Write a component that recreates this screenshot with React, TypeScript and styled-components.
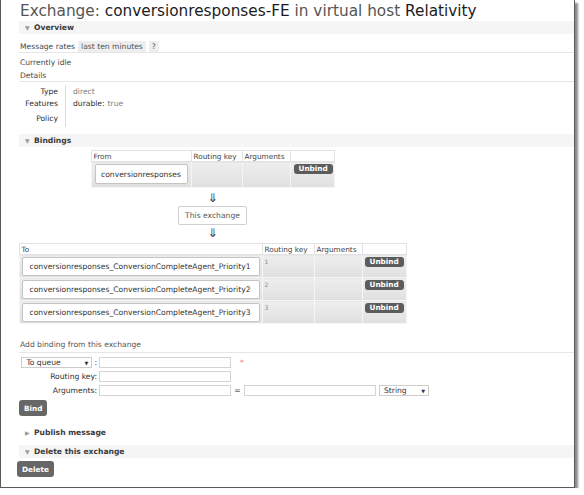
import styled, { createGlobalStyle } from "styled-components";

const GlobalStyle = createGlobalStyle`
  html, body {
    margin: 0;
    padding: 0;
    background: #ffffff;
  }
  body {
    font-family: "DejaVu Sans", Verdana, sans-serif;
    font-size: 7.6px;
    color: #484848;
  }
`;

const Frame = styled.div`
  width: 575px;
  height: 488px;
  box-sizing: border-box;
  border: 1px solid #5a5a5a;
  border-top: none;
  box-shadow: 3px 3px 2px rgba(0, 0, 0, 0.45);
  background: #ffffff;
  padding: 3px 0 0 18px;
  overflow: hidden;
`;

const Title = styled.h1`
  margin: 0 0 1px 1px;
  font-size: 15.3px;
  line-height: 17px;
  font-weight: normal;
  color: #555;
  white-space: nowrap;

  b {
    font-weight: normal;
    color: #1c1c1c;
  }
`;

const SectionHeader = styled.div<{ $band?: boolean }>`
  height: 13px;
  display: flex;
  align-items: center;
  padding-left: 6px;
  background: ${(p) => (p.$band ? "#f5f5f5" : "transparent")};
  font-weight: bold;
  color: #3a3a3a;
`;

const Arrow = styled.span`
  font-size: 6px;
  color: #9a9a9a;
  width: 9px;
`;

const Row = styled.div<{ $line?: boolean }>`
  height: 12px;
  display: flex;
  align-items: center;
  gap: 3px;
  padding-left: 1px;
  border-bottom: 1px solid ${(p) => (p.$line ? "#e6e6e6" : "transparent")};
`;

const Chip = styled.span`
  background: #eeeeee;
  padding: 1px 3px;
  color: #555;
`;

const Details = styled.div`
  display: grid;
  grid-template-columns: 47px 1fr;
  margin: 3px 0 7px 0;
`;

const DetailKey = styled.div<{ $h: number }>`
  height: ${(p) => p.$h}px;
  padding-right: 7px;
  border-right: 1px solid #dcdcdc;
  color: #2e2e2e;
  display: flex;
  align-items: center;
  justify-content: flex-end;
`;

const DetailValue = styled.div<{ $h: number }>`
  height: ${(p) => p.$h}px;
  padding-left: 7px;
  display: flex;
  align-items: center;
  color: #808080;

  b {
    font-weight: normal;
    color: #2e2e2e;
    margin-right: 3px;
  }
`;

const Bindings = styled.div`
  width: 387px;
  display: flex;
  flex-direction: column;
  align-items: center;
  margin-top: 3px;
`;

const Table = styled.table<{ $w: number; $pad: string }>`
  width: ${(p) => p.$w}px;
  border-collapse: collapse;
  table-layout: fixed;
  font-size: 7.3px;

  th {
    text-align: left;
    font-weight: normal;
    color: #444;
    height: 10px;
    padding: 0 2px;
    border: 1px solid #e2e2e2;
    background: #fff;
  }

  td {
    vertical-align: top;
    background: linear-gradient(#eeeeee, #e0e0e0);
    border: 1px solid #f6f6f6;
    padding: ${(p) => p.$pad};
  }
`;

const NameBox = styled.div<{ $h: number; $align?: string }>`
  background: #fff;
  border: 1px solid #c4c4c4;
  border-radius: 2px;
  height: ${(p) => p.$h}px;
  box-sizing: border-box;
  display: flex;
  align-items: center;
  justify-content: ${(p) => p.$align || "center"};
  padding: 0 7px;
  font-size: 7.6px;
  color: #333;
  white-space: nowrap;
`;

const Key = styled.span`
  font-size: 6px;
  color: #888;
`;

const SmallButton = styled.button`
  background: #5c5c5c;
  color: #fff;
  border: none;
  border-radius: 3px;
  font-family: inherit;
  font-weight: bold;
  font-size: 7.3px;
  height: 10px;
  padding: 0 5px;
  line-height: 10px;
`;

const Button = styled.button`
  background: #676767;
  color: #fff;
  border: none;
  border-radius: 3px;
  font-family: inherit;
  font-weight: bold;
  font-size: 7.3px;
  height: 16px;
  padding: 0 5px;
`;

const DownArrow = styled.div<{ $top: number; $bottom: number }>`
  font-size: 12px;
  color: #333;
  line-height: 12px;
  height: 12px;
  margin: ${(p) => p.$top}px 0 ${(p) => p.$bottom}px;
`;

const ExchangeBox = styled.div`
  border: 1px solid #cfcfcf;
  border-radius: 2px;
  height: 19px;
  box-sizing: border-box;
  padding: 0 6px;
  display: flex;
  align-items: center;
  color: #555;
`;

const FormTitle = styled.div`
  margin-top: 16px;
  padding: 0 0 3px 1px;
  border-bottom: 1px solid #e6e6e6;
  color: #555;
`;

const Form = styled.div`
  display: grid;
  grid-template-columns: 80px 132px 13px 132px auto;
  justify-content: start;
  align-items: center;
  row-gap: 3px;
  margin-top: 4px;
`;

const LabelCell = styled.div`
  display: flex;
  justify-content: flex-end;
  align-items: center;
  gap: 2px;
  padding-right: 2px;
  color: #2e2e2e;
  white-space: nowrap;
`;

const Select = styled.div<{ $w: number }>`
  width: ${(p) => p.$w}px;
  height: 11px;
  box-sizing: border-box;
  border: 1px solid #cccccc;
  background: #fff;
  display: flex;
  align-items: center;
  justify-content: space-between;
  padding: 0 3px 0 4px;
  color: #333;

  span {
    font-size: 5px;
  }
`;

const Input = styled.input`
  width: 132px;
  height: 11px;
  box-sizing: border-box;
  border: 1px solid #d4d4d4;
  margin: 0;
  padding: 0 2px;
  font-size: 7px;
`;

const Mark = styled.span<{ $red?: boolean }>`
  color: ${(p) => (p.$red ? "#f08080" : "#666")};
  white-space: nowrap;
  justify-self: ${(p) => (p.$red ? "start" : "center")};
  padding-left: ${(p) => (p.$red ? "9px" : "0")};
`;

const Spaced = styled.div<{ $top: number }>`
  margin-top: ${(p) => p.$top}px;
`;

const queues = [1, 2, 3];

export default function App() {
  return (
    <>
      <GlobalStyle />
      <Frame>
        <Title>
          Exchange: <b>conversionresponses-FE</b> in virtual host <b>Relativity</b>
        </Title>
        <SectionHeader $band>
          <Arrow>▼</Arrow>Overview
        </SectionHeader>
        <Spaced $top={6}>
          <Row $line>
            Message rates <Chip>last ten minutes</Chip>
            <Chip>?</Chip>
          </Row>
          <Spaced $top={3} />
          <Row>Currently idle</Row>
          <Row $line>Details</Row>
          <Details>
            <DetailKey $h={12}>Type</DetailKey>
            <DetailValue $h={12}>direct</DetailValue>
            <DetailKey $h={12}>Features</DetailKey>
            <DetailValue $h={12}>
              <b>durable:</b> true
            </DetailValue>
            <DetailKey $h={18}>Policy</DetailKey>
            <DetailValue $h={18}></DetailValue>
          </Details>
        </Spaced>
        <SectionHeader $band>
          <Arrow>▼</Arrow>Bindings
        </SectionHeader>
        <Bindings>
          <Table $w={243} $pad="2px 3px 3px">
            <colgroup>
              <col style={{ width: 100 }} />
              <col style={{ width: 51 }} />
              <col style={{ width: 48 }} />
              <col style={{ width: 44 }} />
            </colgroup>
            <thead>
              <tr>
                <th>From</th>
                <th>Routing key</th>
                <th>Arguments</th>
                <th></th>
              </tr>
            </thead>
            <tbody>
              <tr>
                <td>
                  <NameBox $h={20}>conversionresponses</NameBox>
                </td>
                <td></td>
                <td></td>
                <td>
                  <SmallButton>Unbind</SmallButton>
                </td>
              </tr>
            </tbody>
          </Table>
          <DownArrow $top={4} $bottom={2}>⇓</DownArrow>
          <ExchangeBox>This exchange</ExchangeBox>
          <DownArrow $top={2} $bottom={4}>⇓</DownArrow>
          <Table $w={387} $pad="2px 2px 1px">
            <colgroup>
              <col style={{ width: 243 }} />
              <col style={{ width: 52 }} />
              <col style={{ width: 48 }} />
              <col style={{ width: 44 }} />
            </colgroup>
            <thead>
              <tr>
                <th>To</th>
                <th>Routing key</th>
                <th>Arguments</th>
                <th></th>
              </tr>
            </thead>
            <tbody>
              {queues.map((n) => (
                <tr key={n}>
                  <td>
                    <NameBox $h={19} $align="flex-start">
                      conversionresponses_ConversionCompleteAgent_Priority{n}
                    </NameBox>
                  </td>
                  <td>
                    <Key>{n}</Key>
                  </td>
                  <td></td>
                  <td>
                    <SmallButton>Unbind</SmallButton>
                  </td>
                </tr>
              ))}
            </tbody>
          </Table>
        </Bindings>
        <FormTitle>Add binding from this exchange</FormTitle>
        <Form>
          <LabelCell>
            <Select $w={71}>
              To queue <span>▼</span>
            </Select>
            :
          </LabelCell>
          <Input />
          <Mark $red>*</Mark>
          <span />
          <span />
          <LabelCell>Routing key:</LabelCell>
          <Input />
          <span />
          <span />
          <span />
          <LabelCell>Arguments:</LabelCell>
          <Input />
          <Mark>=</Mark>
          <Input />
          <Select $w={50} style={{ marginLeft: 3 }}>
            String <span>▼</span>
          </Select>
        </Form>
        <Spaced $top={4}>
          <Button>Bind</Button>
        </Spaced>
        <Spaced $top={10}>
          <SectionHeader>
            <Arrow>▶</Arrow>Publish message
          </SectionHeader>
        </Spaced>
        <Spaced $top={6}>
          <SectionHeader $band>
            <Arrow>▼</Arrow>Delete this exchange
          </SectionHeader>
        </Spaced>
        <Spaced $top={3}>
          <Button style={{ marginLeft: -2 }}>Delete</Button>
        </Spaced>
      </Frame>
    </>
  );
}
